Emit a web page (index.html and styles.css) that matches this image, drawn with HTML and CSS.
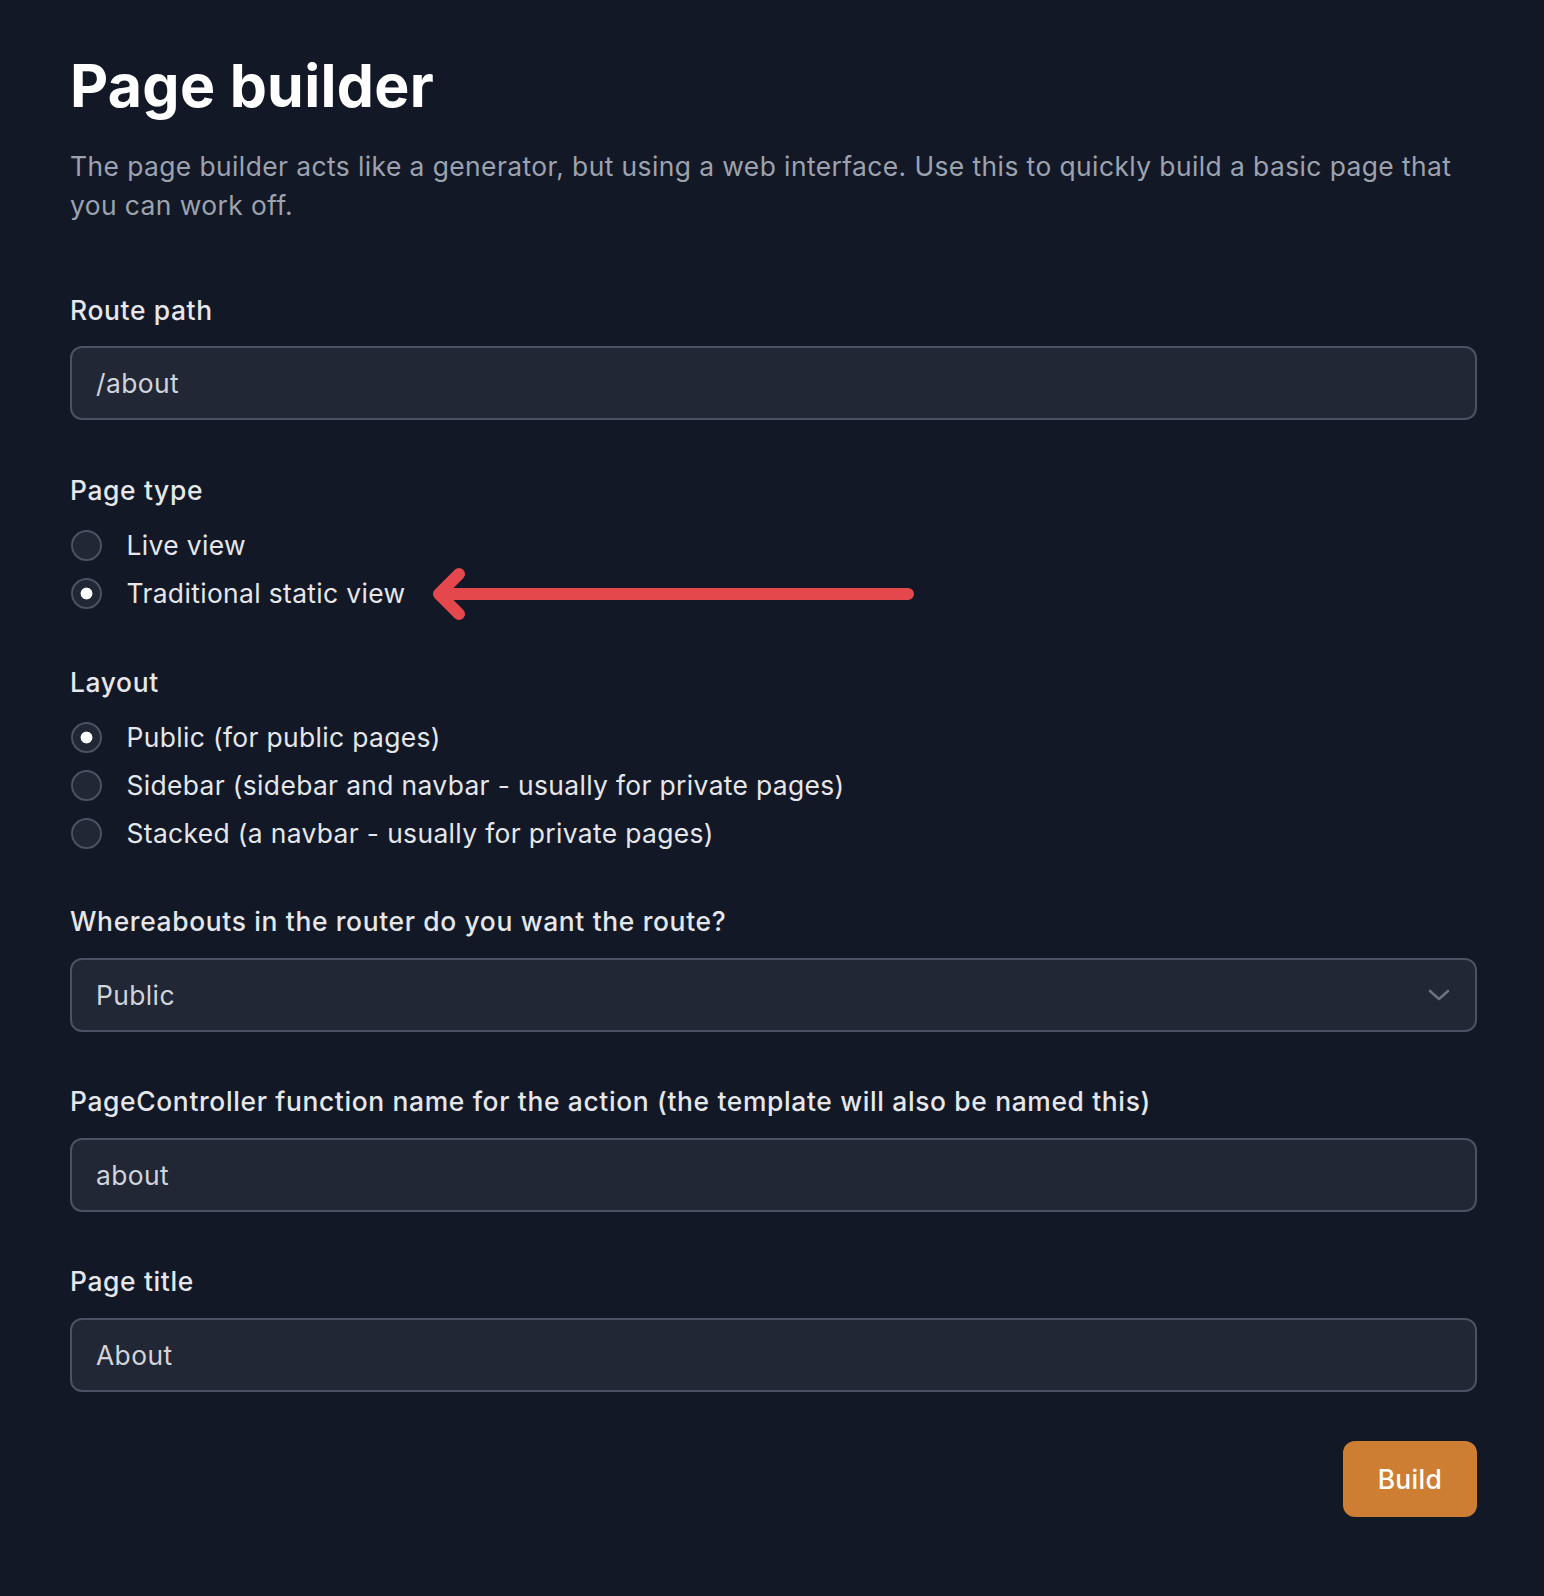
FILE: index.html
```html
<!DOCTYPE html>
<html>
<head>
<meta http-equiv="Content-Type" content="text/html; charset=utf-8"/>
<title>Page builder</title>
<link rel="stylesheet" href="styles.css">
</head>
<body>
<main class="page">
  <h1 class="page-title">Page builder</h1>
  <p class="lead">The page builder acts like a generator, but using a web interface. Use this to quickly build a basic page that you can work off.</p>

  <form class="builder">
    <div class="field">
      <label class="field-label" for="route">Route path</label>
      <input class="text-input" id="route" type="text" value="/about">
    </div>

    <div class="field">
      <div class="field-label">Page type</div>
      <div class="radio-list">
        <label class="radio"><input type="radio" name="type"> <span>Live view</span></label>
        <label class="radio"><input type="radio" name="type" checked> <span>Traditional static view</span>
          <!-- annotation arrow over the page -->
          <svg class="pointer" width="496" height="66" viewBox="0 0 496 66">
            <path d="M482 33 H13 M33 13 L13 33 L33 53" fill="none" stroke="#e4484d" stroke-width="12" stroke-linecap="round" stroke-linejoin="round"/>
          </svg>
        </label>
      </div>
    </div>

    <div class="field">
      <div class="field-label">Layout</div>
      <div class="radio-list">
        <label class="radio"><input type="radio" name="layout" checked> <span>Public (for public pages)</span></label>
        <label class="radio"><input type="radio" name="layout"> <span>Sidebar (sidebar and navbar - usually for private pages)</span></label>
        <label class="radio"><input type="radio" name="layout"> <span>Stacked (a navbar - usually for private pages)</span></label>
      </div>
    </div>

    <div class="field">
      <label class="field-label" for="where">Whereabouts in the router do you want the route?</label>
      <div class="select-wrap">
        <select class="select-input" id="where">
          <option>Public</option>
          <option>Authenticated</option>
        </select>
        <svg class="chevron" width="22" height="14" viewBox="0 0 22 14">
          <path d="M2 3 L11 11 L20 3" fill="none" stroke="#6b7280" stroke-width="2.6" stroke-linecap="round" stroke-linejoin="round"/>
        </svg>
      </div>
    </div>

    <div class="field">
      <label class="field-label" for="action">PageController function name for the action (the template will also be named this)</label>
      <input class="text-input" id="action" type="text" value="about">
    </div>

    <div class="field">
      <label class="field-label" for="title">Page title</label>
      <input class="text-input" id="title" type="text" value="About">
    </div>

    <div class="actions">
      <button class="btn-build" type="button">Build</button>
    </div>
  </form>
</main>
</body>
</html>
```

FILE: styles.css
```css
html, body {
  margin: 0;
  background-color: #131826;
}

body {
  font-family: Inter, "Noto Sans", sans-serif;
  color: #e5e7eb;
  min-height: 1596px;
}

.page {
  padding: 53px 67px 60px 70px;
}

.page-title {
  margin: 0;
  font-size: 59px;
  line-height: 66px;
  font-weight: 700;
  color: #ffffff;
  letter-spacing: 0.3px;
}

.lead {
  margin: 27.5px 0 0;
  font-size: 26.4px;
  line-height: 39.4px;
  letter-spacing: 0.42px;
  color: #9ca3af;
}

.builder {
  margin-top: 64.6px;
  display: flex;
  flex-direction: column;
  gap: 49.4px;
}

.field {
  display: flex;
  flex-direction: column;
}

.field-label {
  font-size: 26.4px;
  line-height: 40px;
  font-weight: 500;
  letter-spacing: 0.65px;
  color: #e5e7eb;
  margin-bottom: 16.2px;
}

.text-input,
.select-input {
  box-sizing: border-box;
  width: 100%;
  height: 74.4px;
  margin: 0;
  padding: 0 24px;
  font-family: inherit;
  font-size: 26.4px;
  letter-spacing: 0.4px;
  color: #d1d5db;
  background-color: #222735;
  border: 2px solid #4b5263;
  border-radius: 12px;
  outline: none;
}

.select-wrap {
  position: relative;
}

.select-input {
  appearance: none;
  -webkit-appearance: none;
}

.chevron {
  position: absolute;
  right: 27px;
  top: 30px;
  pointer-events: none;
}

.radio-list {
  display: flex;
  flex-direction: column;
  gap: 8px;
  margin-top: -0.6px;
  margin-bottom: -1.2px;
}

.radio {
  position: relative;
  display: flex;
  align-items: center;
  height: 40px;
  font-size: 26.4px;
  letter-spacing: 0.36px;
  color: #e5e7eb;
}

.radio input {
  appearance: none;
  -webkit-appearance: none;
  box-sizing: border-box;
  width: 31px;
  height: 31px;
  margin: 0 25px 0 0.5px;
  border: 2px solid #4b5263;
  border-radius: 50%;
  background-color: #222735;
}

.radio input:checked {
  background: radial-gradient(circle, #ffffff 0 5.5px, #222735 6.3px);
}

.pointer {
  position: absolute;
  left: 356px;
  top: -12px;
}

.actions {
  display: flex;
  justify-content: flex-end;
}

.btn-build {
  height: 75.6px;
  padding: 0 35px;
  font-family: inherit;
  font-size: 26.4px;
  font-weight: 500;
  letter-spacing: 0.3px;
  color: #ffffff;
  background-color: #cd7e32;
  border: none;
  border-radius: 12px;
}
```
